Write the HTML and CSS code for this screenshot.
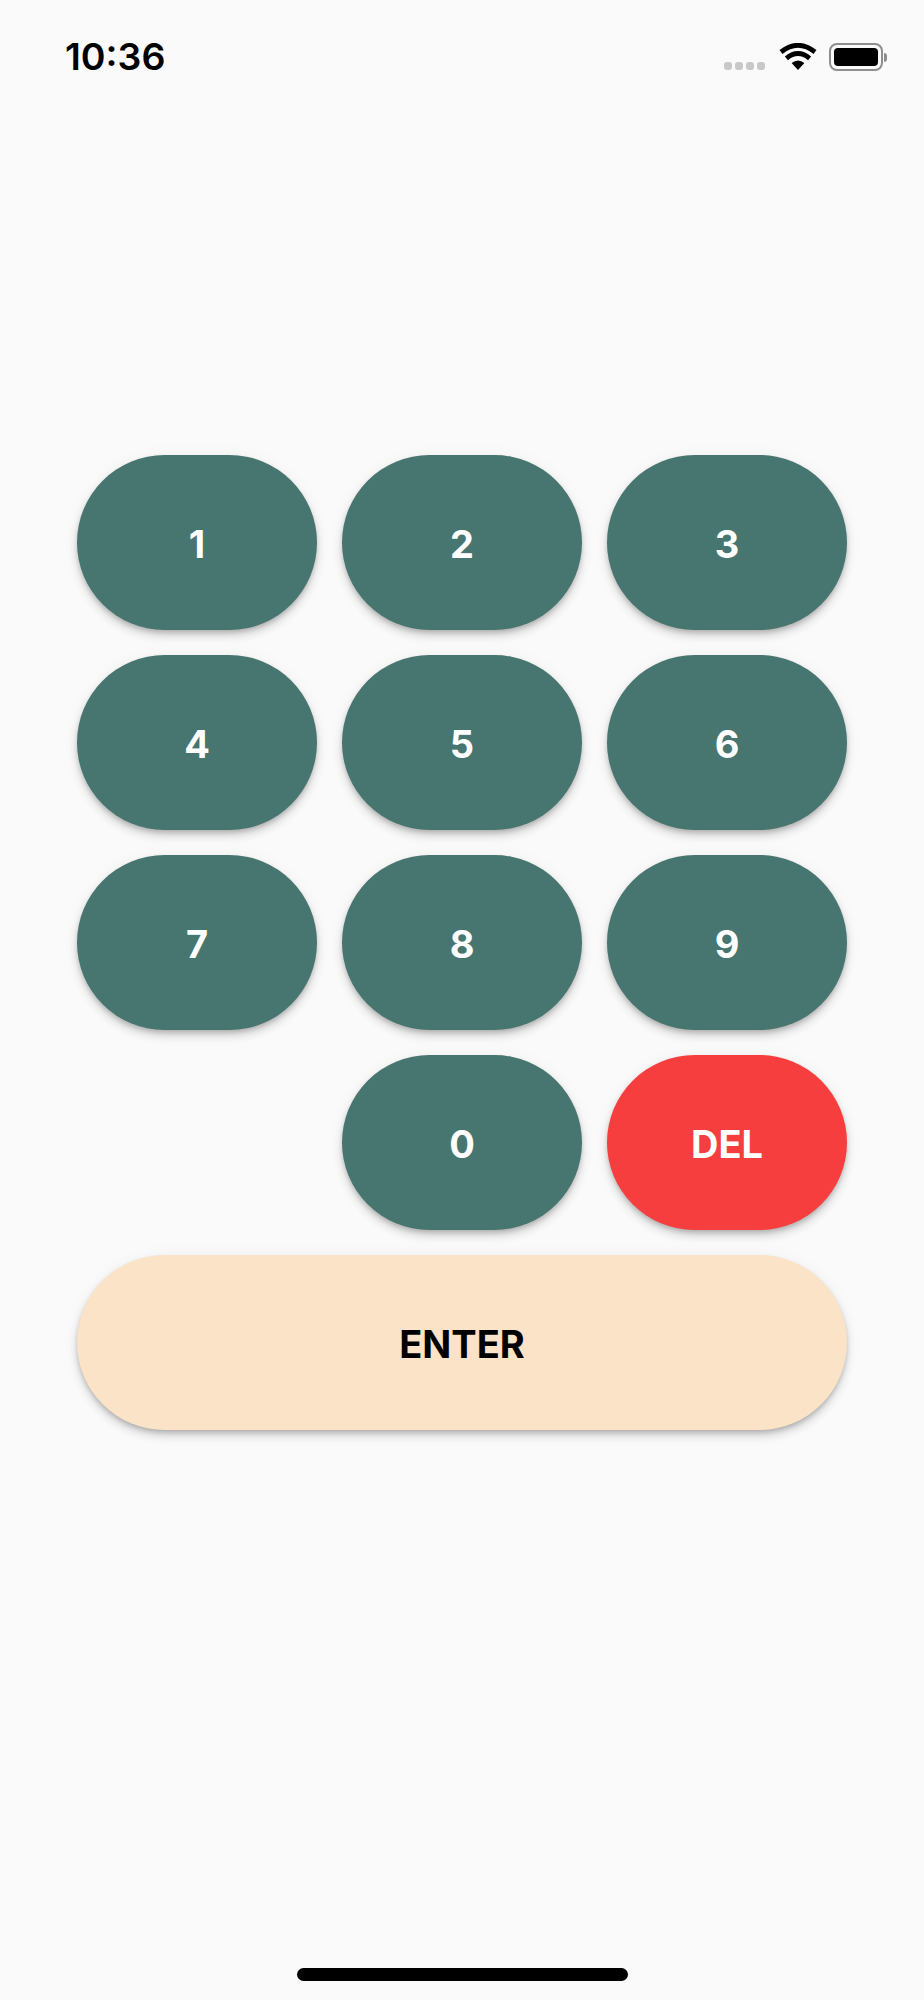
FILE: index.html
```html
<!DOCTYPE html>
<html lang="en">
<head>
<meta charset="utf-8">
<title>Keypad</title>
<link rel="stylesheet" href="styles.css">
</head>
<body>
<div class="screen">
  <header class="status">
    <span class="time">10:36</span>
    <div class="indicators">
      <div class="signal"><i></i><i></i><i></i><i></i></div>
      <svg class="wifi" width="38" height="27" viewBox="0 0 38 27">
        <path d="M19 27 L12.6 20 Q19 15 25.4 20 Z" fill="#000"/>
        <path d="M7.4 15.4 Q19 5.8 30.6 15.4" fill="none" stroke="#000" stroke-width="4.8"/>
        <path d="M2 9 Q19 -4.4 36 9" fill="none" stroke="#000" stroke-width="4.8"/>
      </svg>
      <div class="battery"><div class="battery-body"><div class="battery-fill"></div></div><div class="battery-cap"></div></div>
    </div>
  </header>
  <main class="keypad">
    <button class="key">1</button>
    <button class="key">2</button>
    <button class="key">3</button>
    <button class="key">4</button>
    <button class="key">5</button>
    <button class="key">6</button>
    <button class="key">7</button>
    <button class="key">8</button>
    <button class="key">9</button>
    <button class="key zero">0</button>
    <button class="key del">DEL</button>
    <button class="key enter">ENTER</button>
  </main>
  <div class="home-indicator"></div>
</div>
</body>
</html>
```
FILE: styles.css
```css
* { box-sizing: border-box; }
html, body { margin: 0; padding: 0; background: #fafafa; }
.screen {
  position: relative;
  width: 924px;
  height: 2000px;
  background: #fafafa;
  overflow: hidden;
}
.status {
  display: flex;
  justify-content: space-between;
  align-items: flex-start;
  height: 455px;
  padding: 36px 37px 0 65px;
}
.time {
  font-family: Inter, sans-serif;
  font-size: 37.5px;
  line-height: 42px;
  font-weight: 600;
  color: #000;
}
.indicators {
  display: flex;
  align-items: flex-start;
  margin-top: 7px;
}
.signal {
  display: flex;
  gap: 3px;
  margin-top: 19px;
  margin-right: 14px;
}
.signal i {
  display: block;
  width: 8px;
  height: 8px;
  border-radius: 3px;
  background: #c8c8c8;
}
.wifi { margin-right: 12px; }
.battery { display: flex; align-items: center; height: 28px; }
.battery-body {
  width: 54px;
  height: 28px;
  border: 2px solid #8e8e8e;
  border-radius: 8px;
  padding: 3px;
}
.battery-fill {
  width: 100%;
  height: 100%;
  border-radius: 4px;
  background: #000;
}
.battery-cap {
  width: 3px;
  height: 9px;
  margin-left: 1px;
  border-radius: 0 3px 3px 0;
  background: #8e8e8e;
}
.keypad {
  display: grid;
  grid-template-columns: repeat(3, 240px);
  grid-auto-rows: 175px;
  gap: 25px;
  padding-left: 77px;
}
.key {
  border: 0;
  padding: 2px 0 0;
  border-radius: 88px;
  background: #47756f;
  color: #fff;
  font-family: Inter, sans-serif;
  font-size: 38px;
  font-weight: 700;
  box-shadow: 0 3px 5px -1px rgba(0,0,0,.2), 0 6px 10px 0 rgba(0,0,0,.14), 0 1px 18px 0 rgba(0,0,0,.04);
}
.zero { grid-column: 2; }
.del { background: #f73e3e; }
.enter {
  grid-column: 1 / -1;
  background: #fae3c6;
  color: #000;
}
.home-indicator {
  position: absolute;
  left: 297px;
  top: 1968px;
  width: 331px;
  height: 13px;
  border-radius: 7px;
  background: #000;
}
```
